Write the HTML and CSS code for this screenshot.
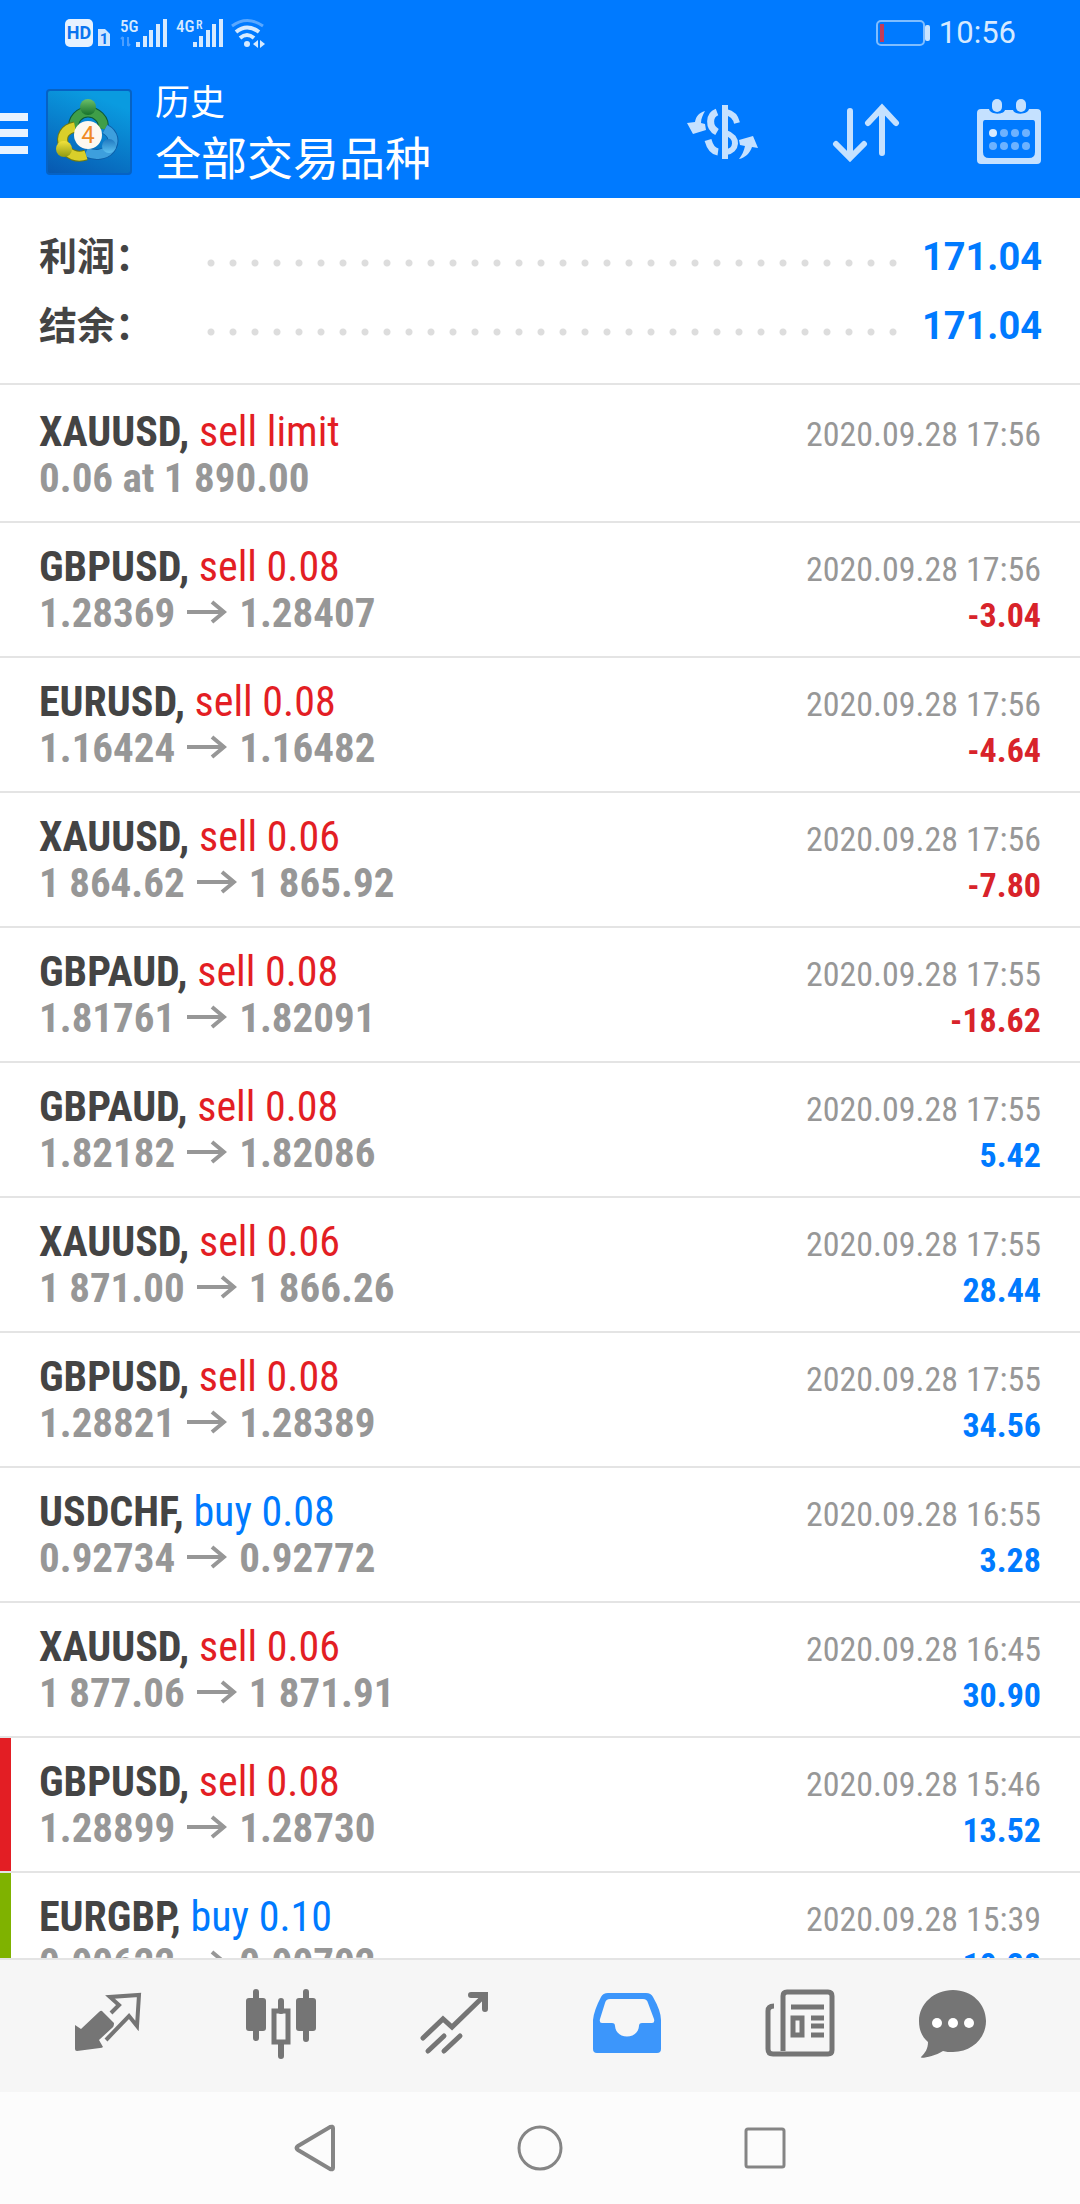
FILE: index.html
```html
<!DOCTYPE html>
<html lang="zh-CN">
<head>
<meta charset="utf-8">
<meta name="viewport" content="width=device-width, initial-scale=1">
<title>历史</title>
<link rel="stylesheet" href="styles.css">
</head>
<body>
<div class="app">
  <header class="header">
    <div class="status">
      <svg class="status-icons" width="204" height="32" viewBox="0 0 204 32" aria-hidden="true">
        <rect x="1" y="2" width="28" height="28" rx="5" fill="#e6f2ff"/>
        <text x="15" y="22" font-size="18" font-weight="700" text-anchor="middle" fill="#0a74ef">HD</text>
        <path d="M34 12h7l5 5v12h-12z" fill="#cfe6ff"/>
        <text x="40" y="27" font-size="15" font-weight="700" text-anchor="middle" fill="#0a74ef">1</text>
        <g fill="#d6eaff">
          <text x="56" y="15" font-size="17" font-weight="500" class="cond">5G</text>
          <rect x="72" y="25" width="4" height="5"/><rect x="79" y="19" width="4" height="11"/><rect x="85" y="13" width="4" height="17"/><rect x="92" y="7" width="4" height="23"/><rect x="99" y="2" width="4" height="28"/>
          <text x="112" y="15" font-size="17" font-weight="500" class="cond">4G</text>
          <text x="132" y="12" font-size="12" font-weight="500" class="cond">R</text>
          <rect x="129" y="25" width="4" height="5"/><rect x="135" y="19" width="4" height="11"/><rect x="142" y="13" width="4" height="17"/><rect x="148" y="7" width="4" height="23"/><rect x="155" y="2" width="4" height="28"/>
          <circle cx="183" cy="27" r="3"/>
          <path d="M194 23l-5 4 5 4zM196 23l5 4-5 4z"/>
        </g>
        <path d="M59 20v9M57 22l2-2M64 20v9M66 27l-2 2" stroke="#4c9fff" stroke-width="2" fill="none"/>
        <g fill="none" stroke="#d6eaff" stroke-width="4">
          <path d="M176 21q7-6 14 0"/><path d="M172 15q11-9 23 0"/>
          <path d="M168 9q15-11 31 0" stroke="#5aa8ff" stroke-width="3"/>
        </g>
      </svg>
      <div class="status-right">
        <svg width="54" height="28" viewBox="0 0 54 28" aria-hidden="true">
          <rect x="1" y="2" width="47" height="24" rx="4" fill="none" stroke="#7fbdff" stroke-width="2"/>
          <rect x="4" y="5" width="4" height="18" fill="#c23c5a"/>
          <rect x="49" y="6" width="5" height="16" rx="2" fill="#c9e3ff"/>
        </svg>
        <span class="clock">10:56</span>
      </div>
    </div>
    <div class="appbar">
      <button class="menu" type="button" aria-label="菜单">
        <svg width="28" height="42" viewBox="0 0 28 42"><path d="M0 4h28M0 20h28M0 37h28" stroke="#e8f3ff" stroke-width="8"/></svg>
      </button>
      <svg class="logo" width="86" height="86" viewBox="0 0 86 86" aria-hidden="true">
        <defs>
          <linearGradient id="bg" x1="0" y1="1" x2=".4" y2="0"><stop offset="0" stop-color="#0757b0"/><stop offset="1" stop-color="#0a9be0"/></linearGradient>
          <linearGradient id="gr" x1="0" y1="0" x2="0" y2="1"><stop offset="0" stop-color="#6cc06a"/><stop offset="1" stop-color="#16722d"/></linearGradient>
          <linearGradient id="ye" x1="0" y1="0" x2="0" y2="1"><stop offset="0" stop-color="#f3e23c"/><stop offset="1" stop-color="#8f9a12"/></linearGradient>
          <linearGradient id="bl" x1="0" y1="0" x2="0" y2="1"><stop offset="0" stop-color="#1f78c0"/><stop offset="1" stop-color="#5cc0f0"/></linearGradient>
        </defs>
        <rect x="1" y="1" width="84" height="84" rx="3" fill="url(#bg)" stroke="#0662c4" stroke-width="2"/>
        <path d="M28 40C26 30 34 23 42 23s17 7 15 17" fill="none" stroke="#0c5a3a" stroke-width="11"/>
        <path d="M28 40C26 30 34 23 42 23s17 7 15 17" fill="none" stroke="#3f9e48" stroke-width="9"/>
        <path d="M59 40c9 5 10 13 5 20-5 6-15 7-24 3" fill="none" stroke="#0d5fa8" stroke-width="11"/>
        <path d="M59 40c9 5 10 13 5 20-5 6-15 7-24 3" fill="none" stroke="#3d9fdd" stroke-width="9"/>
        <path d="M29 38C19 40 14 47 18 57c4 9 13 12 22 9" fill="none" stroke="#6f7a10" stroke-width="11"/>
        <path d="M29 38C19 40 14 47 18 57c4 9 13 12 22 9" fill="none" stroke="#d9cf2a" stroke-width="9"/>
        <circle cx="42" cy="18" r="8" fill="url(#gr)"/>
        <circle cx="18" cy="60" r="8" fill="url(#ye)"/>
        <circle cx="63" cy="57" r="7" fill="url(#bl)"/>
        <circle cx="42" cy="46" r="14" fill="#fdf8f0"/>
        <text x="42" y="54" font-size="24" text-anchor="middle" fill="#f08a24">4</text>
      </svg>
      <div class="titles">
        <span class="title-small">历史</span>
        <h1 class="title">全部交易品种</h1>
      </div>
      <div class="actions">
        <button type="button" aria-label="品种">
          <svg width="74" height="60" viewBox="0 0 74 60" fill="none" stroke="#c5e1ff" stroke-width="6">
            <path d="M39 3v54"/>
            <path d="M31 10c-8 3-9 15 0 20" stroke-width="7"/>
            <path d="M40 10q9 2 11 11"/>
            <path d="M22 38q3 11 10 12" stroke-width="7"/>
            <path d="M40 31c13 4 11 18 0 19"/>
            <path d="M19 9c-6 2-9 5-10 11L1 21l6 11 13-4-1-6-4-1c0-5 2-8 4-12z" fill="#c5e1ff" stroke="none"/>
            <path d="M53 57c6-1 11-6 13-12l6 1-5-12-14 4 1 5 5 1c-1 5-3 9-6 13z" fill="#c5e1ff" stroke="none"/>
          </svg>
        </button>
        <button type="button" aria-label="排序">
          <svg width="68" height="60" viewBox="0 0 68 60" fill="none" stroke="#c5e1ff" stroke-width="6" stroke-linecap="round"><path d="M18 9v46M4 42l14 14 14-14M50 51V6M36 21L50 6l14 15"/></svg>
        </button>
        <button type="button" aria-label="日历">
          <svg width="64" height="68" viewBox="0 0 64 68">
            <path fill="#c5e1ff" fill-rule="evenodd" d="M4 11h8c1 6 15 6 16 1h8c1 5 15 5 16-1h8q4 0 4 4v47q0 4-4 4H4q-4 0-4-4V15q0-4 4-4zM8 22q-2 0-2 3v29q0 6 6 6h40q6 0 6-6V25q0-3-2-3z"/>
            <rect x="15" y="1" width="10" height="13" rx="5" fill="#c5e1ff"/><rect x="39" y="1" width="10" height="13" rx="5" fill="#c5e1ff"/>
            <circle cx="16" cy="35" r="4" fill="#d8ebff"/>
            <g fill="#6db2ff"><circle cx="27" cy="35" r="4"/><circle cx="38" cy="35" r="4"/><circle cx="49" cy="35" r="4"/><circle cx="16" cy="48" r="4"/><circle cx="27" cy="48" r="4"/><circle cx="38" cy="48" r="4"/><circle cx="49" cy="48" r="4"/></g>
          </svg>
        </button>
      </div>
    </div>
  </header>

  <svg class="defs" width="0" height="0" aria-hidden="true"><symbol id="arrow" viewBox="0 0 40 24"><path d="M0 12h37M25 2l12 10-12 10" fill="none" stroke="#979797" stroke-width="4"/></symbol></svg>

  <main class="content">
    <dl class="summary">
      <div class="sum-row"><dt>利润：</dt><dd class="dots"></dd><dd class="sum-value">171.04</dd></div>
      <div class="sum-row"><dt>结余：</dt><dd class="dots"></dd><dd class="sum-value">171.04</dd></div>
    </dl>
    <ul class="deals">
      <li class="deal first"><div class="line"><p class="name"><b>XAUUSD,</b> <span class="sell">sell limit</span></p><time>2020.09.28 17:56</time></div><div class="line"><p class="price">0.06 at 1 890.00</p></div></li>
      <li class="deal"><div class="line"><p class="name"><b>GBPUSD,</b> <span class="sell">sell 0.08</span></p><time>2020.09.28 17:56</time></div><div class="line"><p class="price">1.28369<svg class="arrow"><use href="#arrow"/></svg>1.28407</p><span class="amount loss">-3.04</span></div></li>
      <li class="deal"><div class="line"><p class="name"><b>EURUSD,</b> <span class="sell">sell 0.08</span></p><time>2020.09.28 17:56</time></div><div class="line"><p class="price">1.16424<svg class="arrow"><use href="#arrow"/></svg>1.16482</p><span class="amount loss">-4.64</span></div></li>
      <li class="deal"><div class="line"><p class="name"><b>XAUUSD,</b> <span class="sell">sell 0.06</span></p><time>2020.09.28 17:56</time></div><div class="line"><p class="price">1 864.62<svg class="arrow"><use href="#arrow"/></svg>1 865.92</p><span class="amount loss">-7.80</span></div></li>
      <li class="deal"><div class="line"><p class="name"><b>GBPAUD,</b> <span class="sell">sell 0.08</span></p><time>2020.09.28 17:55</time></div><div class="line"><p class="price">1.81761<svg class="arrow"><use href="#arrow"/></svg>1.82091</p><span class="amount loss">-18.62</span></div></li>
      <li class="deal"><div class="line"><p class="name"><b>GBPAUD,</b> <span class="sell">sell 0.08</span></p><time>2020.09.28 17:55</time></div><div class="line"><p class="price">1.82182<svg class="arrow"><use href="#arrow"/></svg>1.82086</p><span class="amount">5.42</span></div></li>
      <li class="deal"><div class="line"><p class="name"><b>XAUUSD,</b> <span class="sell">sell 0.06</span></p><time>2020.09.28 17:55</time></div><div class="line"><p class="price">1 871.00<svg class="arrow"><use href="#arrow"/></svg>1 866.26</p><span class="amount">28.44</span></div></li>
      <li class="deal"><div class="line"><p class="name"><b>GBPUSD,</b> <span class="sell">sell 0.08</span></p><time>2020.09.28 17:55</time></div><div class="line"><p class="price">1.28821<svg class="arrow"><use href="#arrow"/></svg>1.28389</p><span class="amount">34.56</span></div></li>
      <li class="deal"><div class="line"><p class="name"><b>USDCHF,</b> <span class="buy">buy 0.08</span></p><time>2020.09.28 16:55</time></div><div class="line"><p class="price">0.92734<svg class="arrow"><use href="#arrow"/></svg>0.92772</p><span class="amount">3.28</span></div></li>
      <li class="deal"><div class="line"><p class="name"><b>XAUUSD,</b> <span class="sell">sell 0.06</span></p><time>2020.09.28 16:45</time></div><div class="line"><p class="price">1 877.06<svg class="arrow"><use href="#arrow"/></svg>1 871.91</p><span class="amount">30.90</span></div></li>
      <li class="deal mark-red"><div class="line"><p class="name"><b>GBPUSD,</b> <span class="sell">sell 0.08</span></p><time>2020.09.28 15:46</time></div><div class="line"><p class="price">1.28899<svg class="arrow"><use href="#arrow"/></svg>1.28730</p><span class="amount">13.52</span></div></li>
      <li class="deal mark-green"><div class="line"><p class="name"><b>EURGBP,</b> <span class="buy">buy 0.10</span></p><time>2020.09.28 15:39</time></div><div class="line"><p class="price">0.90622<svg class="arrow"><use href="#arrow"/></svg>0.90702</p><span class="amount">10.28</span></div></li>
    </ul>
  </main>

  <nav class="tabs" aria-label="主导航">
    <button type="button" aria-label="行情">
      <svg width="70" height="70" viewBox="0 0 70 70"><path fill="#757575" d="M29 22l12 12q0 4-2 5L26 51l4 7q-1 1-3 1L4 62q-2 0-2-2V36l6 4 18-17q2-2 3-1z"/><path fill="none" stroke="#757575" stroke-width="4" d="M38 24l8-8-9-8 29-2-2 31-8-10-23 24"/></svg>
    </button>
    <button type="button" aria-label="图表">
      <svg width="70" height="70" viewBox="0 0 70 70" fill="#757575"><rect x="0" y="9" width="20" height="33" rx="3"/><rect x="50" y="9" width="20" height="33" rx="3"/><path d="M10 3v46M60 3v47M35 12v10M35 54v13" stroke="#757575" stroke-width="6" stroke-linecap="round"/><rect x="28" y="22" width="14" height="31" fill="none" stroke="#757575" stroke-width="5"/></svg>
    </button>
    <button type="button" aria-label="交易">
      <svg width="70" height="70" viewBox="0 0 70 70" fill="none" stroke="#757575" stroke-width="5" stroke-linecap="round" stroke-linejoin="miter"><path d="M4 49l20-19 9 8L65 7"/><path d="M52 6h14v14" stroke-width="6"/><path d="M25 47L9 62M41 47L25 62"/></svg>
    </button>
    <button type="button" aria-label="历史" aria-current="page">
      <svg width="70" height="70" viewBox="0 0 70 70"><path fill="#3c96fb" fill-rule="evenodd" d="M16 4h38q5 0 7 4 8 14 8 23v29q0 4-4 4H5q-4 0-4-4V31Q2 21 9 8q2-4 7-4zM18 10q-4 0-5 4L8 30q-1 4 2 4h10q3 0 3 3c1 14 23 14 24 0q0-3 3-3h10q3 0 2-4l-6-16q-1-4-5-4z"/></svg>
    </button>
    <button type="button" aria-label="新闻">
      <svg width="70" height="70" viewBox="0 0 70 70" fill="none" stroke="#757575" stroke-width="5"><path d="M20 65H8q-5 0-5-5V22q0-5 6-5M18 62V7q0-4 4-4h41q4 0 4 4v54q0 4-4 4H18"/><path d="M26 18h33M46 29h13M46 37h13M46 46h13" /><rect x="28" y="29" width="9" height="17"/></svg>
    </button>
    <button type="button" aria-label="消息">
      <svg width="70" height="70" viewBox="0 0 70 70"><path fill="#757575" d="M35 1C16 1 1 15 1 32c0 9 3 16 9 21 0 7-3 11-7 15-2 2 13 0 22-6 3 1 6 1 10 1 19 0 33-14 33-31S54 1 35 1z"/><g fill="#fff"><circle cx="19" cy="34" r="5"/><circle cx="35" cy="34" r="5"/><circle cx="51" cy="34" r="5"/></g></svg>
    </button>
  </nav>

  <div class="sysnav">
    <button type="button" aria-label="返回"><svg width="48" height="48" viewBox="0 0 48 48"><path d="M42 4v40q0 2-3 1L7 26q-3-2 0-4L39 3q3-1 3 1z" fill="none" stroke="#858585" stroke-width="4"/></svg></button>
    <button type="button" aria-label="主页"><svg width="48" height="48" viewBox="0 0 48 48"><circle cx="24" cy="24" r="21" fill="none" stroke="#858585" stroke-width="3"/></svg></button>
    <button type="button" aria-label="最近"><svg width="48" height="48" viewBox="0 0 48 48"><rect x="5" y="5" width="38" height="38" rx="2" fill="none" stroke="#858585" stroke-width="3"/></svg></button>
  </div>
</div>
</body>
</html>
```
FILE: styles.css
```css
* { box-sizing: border-box; margin: 0; padding: 0; }

body {
  background: #fff;
  color: #444;
  font-family: Roboto, "Noto Sans CJK SC", sans-serif;
}

svg { display: block; }
.defs { position: absolute; }
.status-icons { overflow: visible; }
.cond { font-family: "Roboto Condensed", Roboto, sans-serif; }

button {
  display: flex;
  align-items: center;
  justify-content: center;
  border: 0;
  background: none;
  cursor: pointer;
}

.app {
  display: flex;
  flex-direction: column;
  height: 100vh;
}

/* Header */
.header { background: #007aff; color: #fff; }

.status {
  display: flex;
  align-items: center;
  justify-content: space-between;
  height: 66px;
  padding: 0 64px;
}
.status-right { display: flex; align-items: center; gap: 9px; }
.clock { font-size: 31px; line-height: 36px; color: #d6eaff; }

.appbar { display: flex; align-items: center; height: 132px; }
.menu { margin-right: 18px; padding-top: 4px; }
.titles { display: flex; flex-direction: column; margin-left: 23px; padding-top: 6px; }
.title-small { font-size: 35px; line-height: 48px; }
.title { font-size: 46px; line-height: 62px; font-weight: 400; }
.actions { display: flex; margin-left: auto; }
.actions button { width: 143px; height: 132px; }

/* Account summary */
.content { flex: 1; min-height: 0; overflow: hidden; }

.summary {
  padding: 24px 38px 23px 39px;
  border-bottom: 2px solid #e4e4e4;
}
.sum-row { display: flex; align-items: center; height: 69px; }
.sum-row dt { width: 161px; padding-bottom: 6px; font-size: 38px; font-weight: 700; }
.dots {
  flex: 1;
  height: 22px;
  margin: 13px 16px 0 0;
  background: radial-gradient(circle, #ddd 3px, transparent 4px) 0 0 / 22px 22px repeat-x;
}
.sum-value { font-size: 38px; font-weight: 700; color: #007aff; }

/* Deals */
.deals { list-style: none; }
.deal {
  padding: 20px 39px 19px 39px;
  border-bottom: 2px solid #e4e4e4;
  font-family: "Roboto Condensed", Roboto, sans-serif;
}
.first { padding-top: 23px; }
.mark-red { box-shadow: inset 11px 0 #e31e24; }
.mark-green { box-shadow: inset 11px 0 #7fb200; }

.line {
  display: flex;
  align-items: baseline;
  justify-content: space-between;
  height: 47px;
  line-height: 47px;
}
.name { font-size: 42px; }
.price { font-size: 41px; font-weight: 700; color: #979797; }
.arrow { display: inline-block; width: 40px; height: 24px; margin: 0 12px; vertical-align: 3px; }
time { font-size: 34px; color: #979797; }
.amount { font-size: 34px; font-weight: 700; color: #007aff; }
.sell { color: #e31e24; }
.loss { color: #d8232a; }
.buy { color: #007aff; }

/* Bottom bars */
.tabs {
  display: grid;
  grid-template-columns: repeat(5, 173fr) 134fr;
  height: 134px;
  padding: 0 60px 0 21px;
  border-top: 2px solid #e4e4e4;
  background: #f6f6f6;
}
.tabs button { padding-bottom: 4px; }

.sysnav {
  display: flex;
  justify-content: center;
  height: 112px;
  background: #fcfcfc;
}
.sysnav button { width: 225px; }
```
